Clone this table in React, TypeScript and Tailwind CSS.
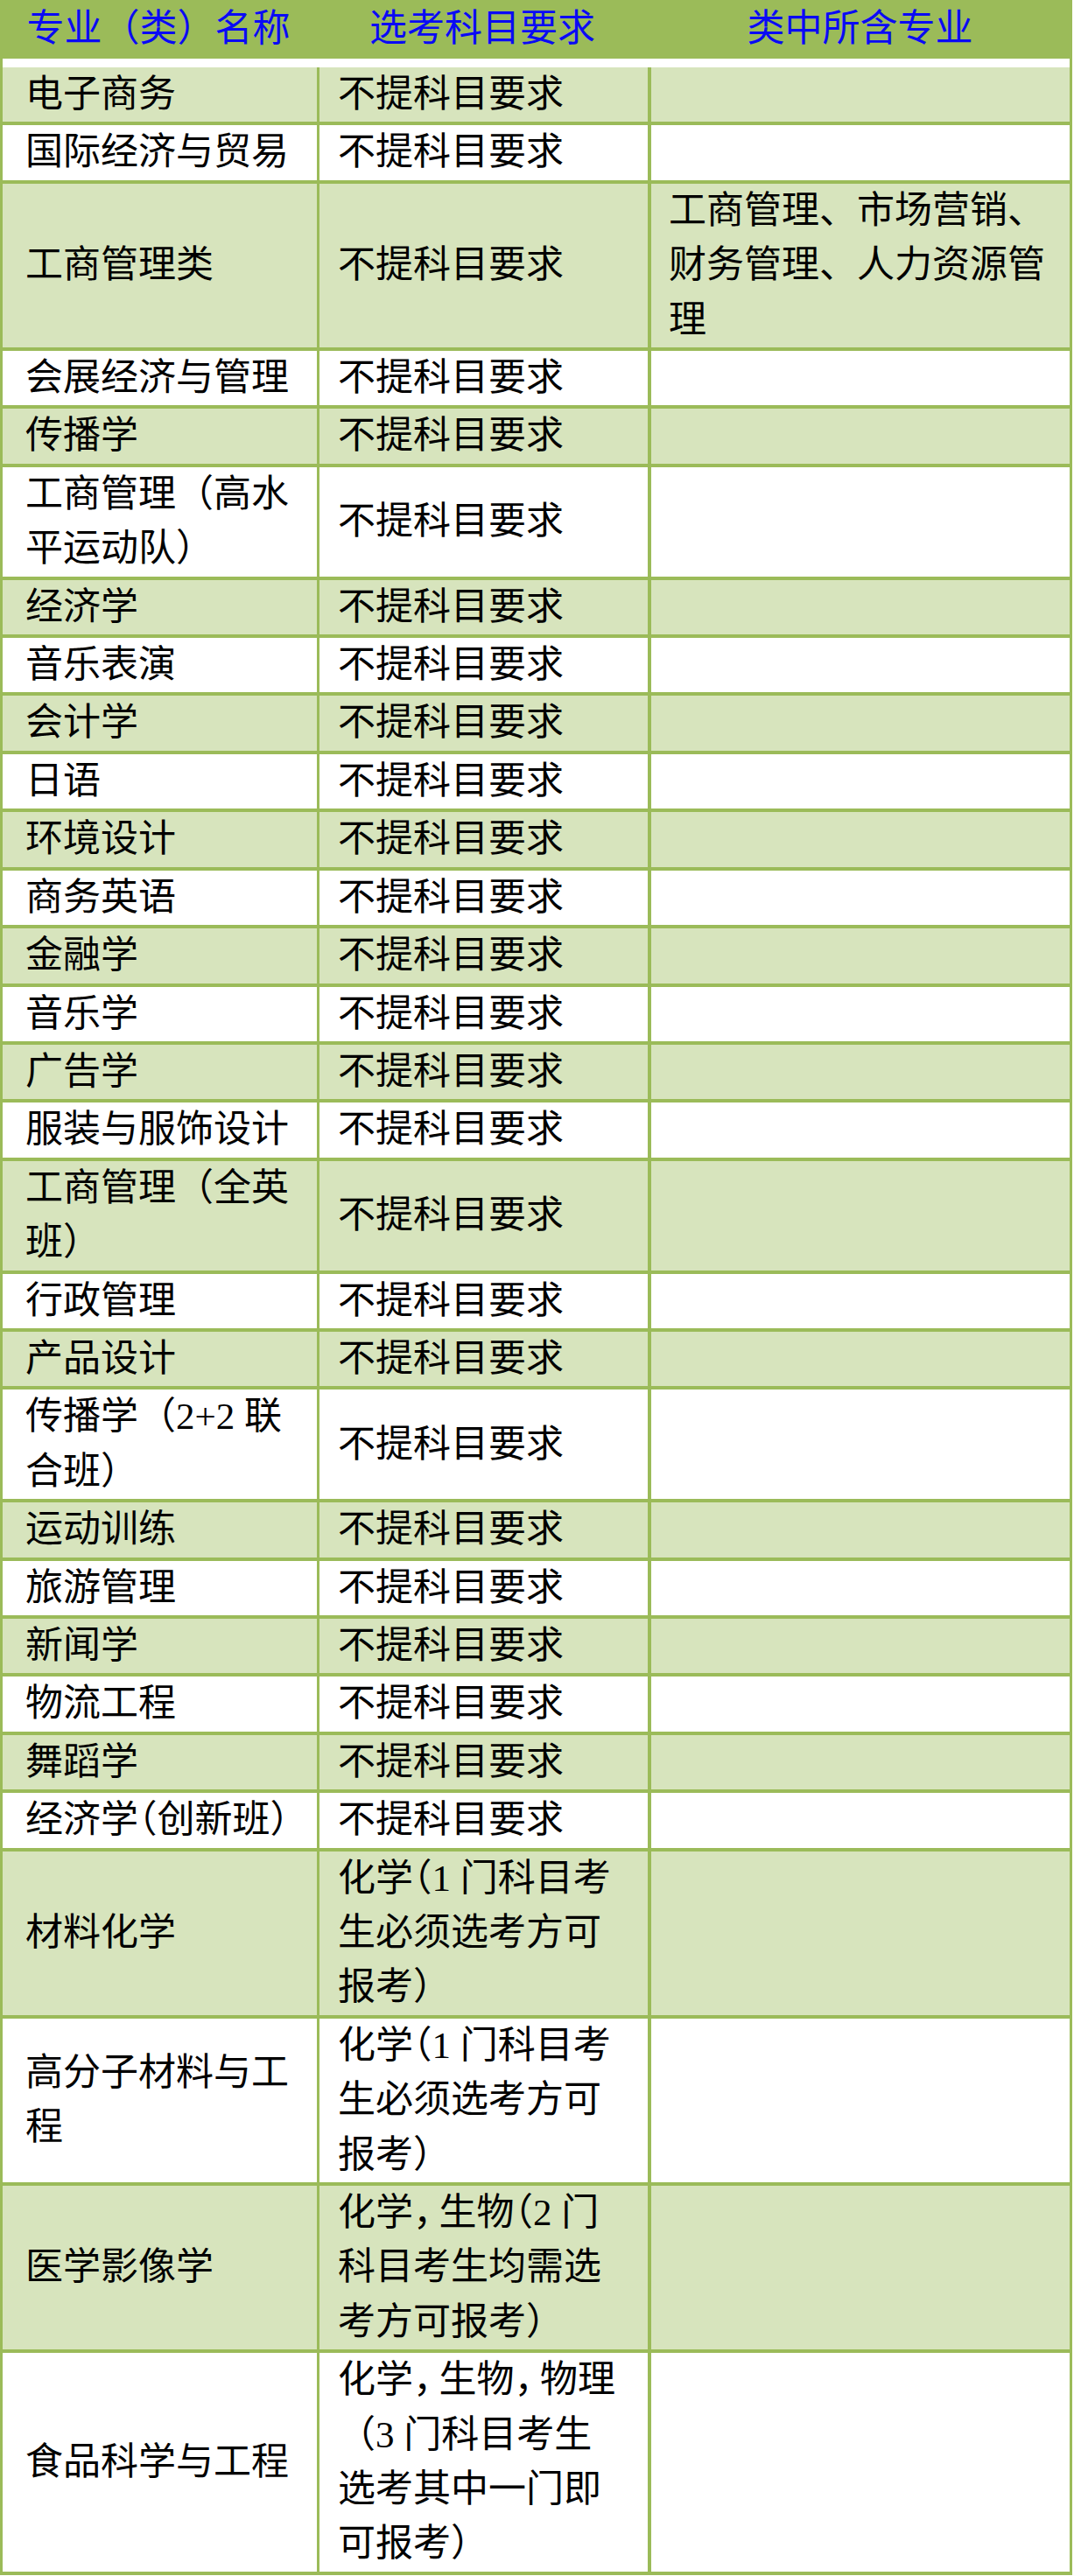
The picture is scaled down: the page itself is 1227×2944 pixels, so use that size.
import React from "react";

type Row = { c1: React.ReactNode[]; c2: React.ReactNode[]; c3?: React.ReactNode[] };

const H = (s: string) => <span className="[font-feature-settings:'halt']">{s}</span>;
const C = () => <span className="mr-[8px] [font-feature-settings:'halt']">，</span>;

const NR = "不提科目要求";

const rows: Row[] = [
  { c1: ["电子商务"], c2: [NR] },
  { c1: ["国际经济与贸易"], c2: [NR] },
  { c1: ["工商管理类"], c2: [NR], c3: ["工商管理、市场营销、", "财务管理、人力资源管", "理"] },
  { c1: ["会展经济与管理"], c2: [NR] },
  { c1: ["传播学"], c2: [NR] },
  { c1: ["工商管理（高水", "平运动队）"], c2: [NR] },
  { c1: ["经济学"], c2: [NR] },
  { c1: ["音乐表演"], c2: [NR] },
  { c1: ["会计学"], c2: [NR] },
  { c1: ["日语"], c2: [NR] },
  { c1: ["环境设计"], c2: [NR] },
  { c1: ["商务英语"], c2: [NR] },
  { c1: ["金融学"], c2: [NR] },
  { c1: ["音乐学"], c2: [NR] },
  { c1: ["广告学"], c2: [NR] },
  { c1: ["服装与服饰设计"], c2: [NR] },
  { c1: ["工商管理（全英", "班）"], c2: [NR] },
  { c1: ["行政管理"], c2: [NR] },
  { c1: ["产品设计"], c2: [NR] },
  { c1: ["传播学（2+2 联", "合班）"], c2: [NR] },
  { c1: ["运动训练"], c2: [NR] },
  { c1: ["旅游管理"], c2: [NR] },
  { c1: ["新闻学"], c2: [NR] },
  { c1: ["物流工程"], c2: [NR] },
  { c1: ["舞蹈学"], c2: [NR] },
  {
    c1: [
      <>
        经济学{H("（")}创新班{H("）")}
      </>,
    ],
    c2: [NR],
  },
  {
    c1: ["材料化学"],
    c2: [
      <>
        化学{H("（")}1 门科目考
      </>,
      "生必须选考方可",
      "报考）",
    ],
  },
  {
    c1: ["高分子材料与工", "程"],
    c2: [
      <>
        化学{H("（")}1 门科目考
      </>,
      "生必须选考方可",
      "报考）",
    ],
  },
  {
    c1: ["医学影像学"],
    c2: [
      <>
        化学<C />生物{H("（")}2 门
      </>,
      "科目考生均需选",
      "考方可报考）",
    ],
  },
  {
    c1: ["食品科学与工程"],
    c2: [
      <>
        化学<C />生物<C />物理
      </>,
      "（3 门科目考生",
      "选考其中一门即",
      "可报考）",
    ],
  },
];

function Lines({ items }: { items: React.ReactNode[] }) {
  return (
    <div className="flex flex-col">
      {items.map((t, i) => (
        <div key={i} className="whitespace-nowrap">
          {t}
        </div>
      ))}
    </div>
  );
}

export default function App() {
  return (
    <div className="w-[1227px] bg-white font-['Liberation_Serif','Noto_Sans_CJK_SC',serif] text-[43px] leading-[62.4px] text-black">
      <div className="w-[1225px] border-x-[3px] border-b-[4px] border-[#9bbb59]">
        {/* header */}
        <div className="-mx-[3px] grid h-[67px] grid-cols-[362px_378px_485px] items-center bg-[#9bbb59] text-[#0a0af5]">
          <div className="text-center whitespace-nowrap">专业（类）名称</div>
          <div className="text-center whitespace-nowrap">选考科目要求</div>
          <div className="text-center whitespace-nowrap">类中所含专业</div>
        </div>
        <div className="h-[10px] bg-white" />
        {rows.map((r, i) => {
          const green = i % 2 === 0;
          const last = i === rows.length - 1;
          return (
            <div
              key={i}
              className={`grid grid-cols-[359px_378px_482px] ${
                last ? "" : "border-b-[4px] border-[#9bbb59]"
              } ${green ? "bg-[#d7e4bd]" : "bg-white"}`}
            >
              <div className="flex items-center pl-[26px]">
                <Lines items={r.c1} />
              </div>
              <div className="flex items-center border-l-[3px] border-[#9bbb59] pl-[21px]">
                <Lines items={r.c2} />
              </div>
              <div className="flex items-start border-l-[4px] border-[#9bbb59] pl-[20px]">
                {r.c3 ? <Lines items={r.c3} /> : null}
              </div>
            </div>
          );
        })}
      </div>
    </div>
  );
}
